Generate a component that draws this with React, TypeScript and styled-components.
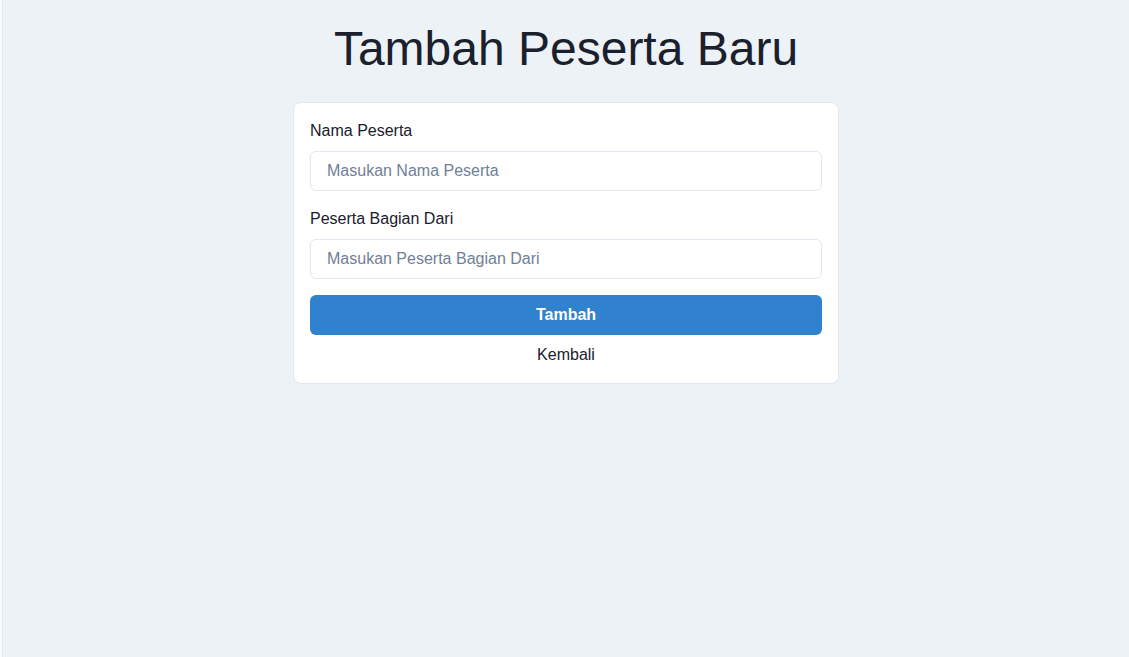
import React from "react";
import styled, { createGlobalStyle } from "styled-components";

const GlobalStyle = createGlobalStyle`
  html, body {
    margin: 0;
    padding: 0;
    background: #f7fafc;
  }
  body {
    font-family: "Liberation Sans", Arial, sans-serif;
    color: #1a202c;
  }
  * { box-sizing: border-box; }
`;

const Page = styled.div`
  margin-left: 2px;
  border-left: 1px solid #e2e8f0;
  min-height: 657px;
  background: #edf2f7;
  display: flex;
  flex-direction: column;
  align-items: center;
  padding-top: 20px;
`;

const Title = styled.h1`
  margin: 0 0 24px;
  font-size: 48px;
  font-weight: 400;
  line-height: 1.2;
  color: #1a202c;
`;

const Card = styled.form`
  width: 546px;
  background: #ffffff;
  border: 1px solid #e2e8f0;
  border-radius: 8px;
  padding: 16px;
  display: flex;
  flex-direction: column;
`;

const Field = styled.div`
  display: flex;
  flex-direction: column;
  margin-bottom: 16px;
`;

const Label = styled.label`
  font-size: 16px;
  line-height: 24px;
  margin-bottom: 8px;
  color: #1a202c;
`;

const Input = styled.input`
  height: 40px;
  width: 100%;
  border: 1px solid #e2e8f0;
  border-radius: 6px;
  padding: 0 16px;
  font-family: inherit;
  font-size: 16px;
  color: #1a202c;
  background: #fff;
  outline: none;
  &::placeholder {
    color: #718096;
  }
`;

const Button = styled.button`
  height: 40px;
  width: 100%;
  border: none;
  border-radius: 6px;
  background: #3182ce;
  color: #ffffff;
  font-family: inherit;
  font-size: 16px;
  font-weight: 700;
  cursor: pointer;
`;

const BackLink = styled.a`
  margin-top: 8px;
  text-align: center;
  font-size: 16px;
  line-height: 24px;
  color: #1a202c;
  text-decoration: none;
  cursor: pointer;
`;

export default function App() {
  return (
    <>
      <GlobalStyle />
      <Page>
        <Title>Tambah Peserta Baru</Title>
        <Card onSubmit={(e) => e.preventDefault()}>
          <Field>
            <Label htmlFor="nama">Nama Peserta</Label>
            <Input id="nama" placeholder="Masukan Nama Peserta" />
          </Field>
          <Field>
            <Label htmlFor="bagian">Peserta Bagian Dari</Label>
            <Input id="bagian" placeholder="Masukan Peserta Bagian Dari" />
          </Field>
          <Button type="submit">Tambah</Button>
          <BackLink>Kembali</BackLink>
        </Card>
      </Page>
    </>
  );
}
